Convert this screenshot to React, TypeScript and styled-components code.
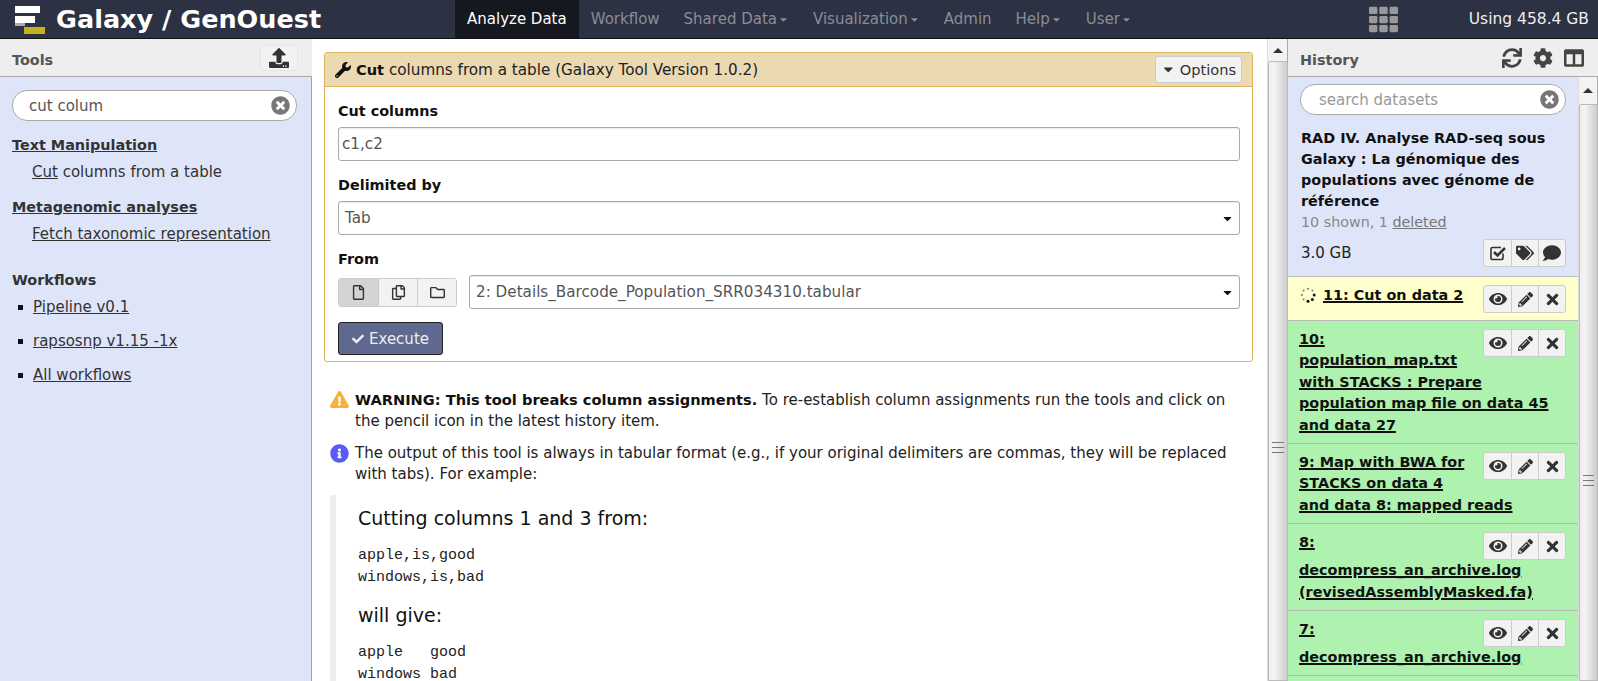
import React from 'react'
import styled, { createGlobalStyle } from 'styled-components'
import {
  FaCaretDown, FaCheck, FaCog, FaColumns, FaComment, FaEye, FaInfoCircle, FaPencilAlt,
  FaExclamationTriangle, FaRegCopy, FaRegFile, FaRegFolder, FaSync,
  FaTags, FaTh, FaTimes, FaTimesCircle, FaUpload, FaWrench,
} from 'react-icons/fa'

const GlobalStyle = createGlobalStyle`
  html, body { margin: 0; height: 100%; overflow: hidden; }
  body { font-family: "DejaVu Sans", Verdana, sans-serif; font-size: 15px; color: #111; background: #fff; }
  b { font-size: 14.6px; }
  * { box-sizing: border-box; }
`

const Page = styled.div`
  display: flex;
  flex-direction: column;
  height: 681px;
  overflow: hidden;
`

const Masthead = styled.header`
  display: flex;
  align-items: center;
  flex: 0 0 39px;
  height: 39px;
  padding-left: 15px;
  background: #2c3143;
  border-bottom: 1px solid #111;
`

const Brand = styled.div`
  display: flex;
  align-items: center;
  gap: 9px;
  width: 440px;
  color: #fff;
  font-size: 25.5px;
  font-weight: bold;
`

const Nav = styled.nav`
  display: flex;
  height: 38px;
  flex: 1;
`

const NavItem = styled.a<{ $active?: boolean }>`
  display: flex;
  align-items: center;
  gap: 1px;
  padding: 0 12px;
  color: ${p => (p.$active ? '#fff' : '#8a8d96')};
  background: ${p => (p.$active ? '#16181f' : 'transparent')};
  svg { font-size: 11px; }
`

const GridIcon = styled(FaTh)`
  color: #999;
  font-size: 29px;
  margin-right: 71px;
`

const Quota = styled.div`
  color: #eee;
  font-size: 15.5px;
  margin-right: 9px;
`

const Body = styled.main`
  flex: 1;
  display: flex;
  min-height: 0;
`

const SidePanel = styled.aside<{ $width: number }>`
  display: flex;
  flex-direction: column;
  flex: 0 0 ${p => p.$width}px;
  width: ${p => p.$width}px;
  min-height: 0;
`

const PanelHeader = styled.div`
  display: flex;
  align-items: center;
  justify-content: space-between;
  flex: 0 0 38px;
  padding: 0 12px;
  background: #eee;
  border-bottom: 1px solid #aaa;
`

const PanelTitle = styled.span`
  margin-top: 4px;
  color: #555;
  font-size: 14.4px;
  font-weight: bold;
`

const UploadButton = styled.div`
  display: flex;
  align-items: center;
  justify-content: center;
  width: 38px;
  height: 26px;
  margin-right: 2px;
  border: 1px solid #e6e6e6;
  border-radius: 3px;
  color: #333;
  font-size: 20px;
  background: #f2f2f2;
`

const ToolsBody = styled.div`
  flex: 1;
  background: #dfe5f9;
  border-right: 1px solid #a0a0b0;
  padding: 13px 14px 0 12px;
`

const Search = styled.div<{ $placeholder?: boolean }>`
  display: flex;
  align-items: center;
  justify-content: space-between;
  height: 31px;
  padding: 0 6px 0 ${p => (p.$placeholder ? 18 : 16)}px;
  background: #fff;
  border: 1px solid #aaa;
  border-radius: 15px;
  color: ${p => (p.$placeholder ? '#999' : '#555')};
  svg { color: #777; font-size: 19px; }
`

const Section = styled.a`
  display: block;
  margin-top: 14px;
  color: #333;
  font-size: 14.4px;
  font-weight: bold;
  text-decoration: underline;
  line-height: 20px;
`

const ToolLink = styled.div`
  margin: 7px 0 0 20px;
  color: #333;
  line-height: 21px;
  u { text-decoration: underline; }
`

const WorkflowsTitle = styled.div`
  margin-top: 25px;
  font-size: 14.4px;
  font-weight: bold;
  color: #333;
  line-height: 20px;
`

const WorkflowItem = styled.div`
  display: flex;
  align-items: center;
  gap: 10px;
  height: 34px;
  color: #333;
  text-decoration: underline;
  &::before {
    content: '';
    width: 5px;
    height: 5px;
    margin-left: 6px;
    background: #111;
  }
`

const Center = styled.section`
  flex: 1;
  min-width: 0;
  overflow: hidden;
  padding: 13px 14px 0 12px;
`

const Scrollbar = styled.div<{ $width: number }>`
  display: flex;
  flex-direction: column;
  flex: 0 0 ${p => p.$width}px;
  background: #f3f3f3;
  border-left: 1px solid #ddd;
  border-right: 1px solid #aaa;
`

const ScrollArrow = styled.div<{ $height: number }>`
  flex: 0 0 ${p => p.$height}px;
  display: flex;
  align-items: center;
  justify-content: center;
  &::before {
    content: '';
    border-left: 5px solid transparent;
    border-right: 5px solid transparent;
    border-bottom: 5px solid #333;
  }
`

const ScrollThumb = styled.div<{ $gripTop: number }>`
  flex: 1;
  margin: 0 -1px 0 0;
  background: linear-gradient(90deg, #eee, #f4f4f4 30%, #ccc);
  border: 1px solid #bbb;
  border-radius: 2px 2px 0 0;
  padding-top: ${p => p.$gripTop}px;
  &::before {
    content: '';
    display: block;
    height: 9px;
    margin: 0 3px;
    border-top: 1px solid #777;
    border-bottom: 1px solid #777;
    background: linear-gradient(#777, #777) center / 100% 1px no-repeat;
  }
`

const ToolCard = styled.div`
  border: 1px solid #dcb35a;
  border-radius: 3px;
`

const CardHeader = styled.div`
  display: flex;
  align-items: center;
  justify-content: space-between;
  height: 34px;
  padding: 0 10px;
  background: #ebd9b2;
  border-bottom: 1px solid #dcb35a;
`

const CardTitle = styled.div`
  display: flex;
  align-items: center;
  gap: 5px;
  color: #222;
  font-size: 15.2px;
  b { color: #111; }
  svg { font-size: 16px; color: #111; }
`

const OptionsButton = styled.div`
  display: flex;
  align-items: center;
  gap: 4px;
  height: 27px;
  padding: 0 5px;
  background: #f2f2f2;
  border: 1px solid #ccc;
  border-radius: 3px;
  color: #333;
  font-size: 14.6px;
`

const CardBody = styled.div`
  padding: 14px 12px 6px 13px;
`

const FieldLabel = styled.div`
  font-size: 14.4px;
  font-weight: bold;
  line-height: 20px;
  margin-bottom: 6px;
  color: #111;
`

const Field = styled.div<{ $indent?: number; $grow?: boolean }>`
  display: flex;
  align-items: center;
  justify-content: space-between;
  height: 34px;
  margin-bottom: 14px;
  padding: 0 5px 0 ${p => p.$indent ?? 6}px;
  border: 1px solid #aaa;
  border-radius: 3px;
  color: #555;
  font-size: 15.2px;
  background: #fff;
  flex: ${p => (p.$grow ? 1 : 'none')};
  box-shadow: inset 0 1px 1px rgba(0, 0, 0, 0.08);
  svg { font-size: 13px; color: #111; }
`

const SourceRow = styled.div`
  display: flex;
  align-items: flex-start;
  gap: 12px;
  margin: 2px 0 -1px;
`

const ButtonGroup = styled.div`
  display: flex;
  border: 1px solid #ccc;
  border-radius: 3px;
  overflow: hidden;
`

const SourceGroup = styled(ButtonGroup)`
  margin-top: 3px;
`

const SourceButton = styled.div<{ $active?: boolean }>`
  display: flex;
  align-items: center;
  justify-content: center;
  width: 39px;
  height: 27px;
  font-size: 15px;
  color: #333;
  background: ${p => (p.$active ? '#d4d4d4' : '#f2f2f2')};
  & + & { border-left: 1px solid #ccc; }
`

const ExecuteButton = styled.div`
  display: inline-flex;
  align-items: center;
  gap: 5px;
  height: 33px;
  padding: 0 13px;
  background: #5f6990;
  border: 1px solid #222;
  border-radius: 3px;
  color: #eee;
  svg { font-size: 12px; }
`

const HelpRow = styled.div<{ $first?: boolean }>`
  display: flex;
  gap: 6px;
  margin: ${p => (p.$first ? '27px' : '11px')} 0 0 6px;
  line-height: 21px;
  color: #222;
  p { margin: 0; padding-right: 20px; }
  b { color: #111; }
`

const WarnIcon = styled(FaExclamationTriangle)`
  flex: none;
  margin-top: 1px;
  color: #fbb03b;
  font-size: 19px;
`

const InfoIcon = styled(FaInfoCircle)`
  flex: none;
  margin-top: 1px;
  color: #5a5af5;
  font-size: 19px;
`

const Quote = styled.blockquote`
  margin: 10px 0 0 6px;
  padding: 9px 0 0 22px;
  border-left: 6px solid #eee;
`

const QuoteHeading = styled.div`
  font-size: 19px;
  line-height: 28px;
  color: #111;
`

const Sample = styled.pre`
  margin: 13px 0 12px;
  font-family: "Liberation Mono", monospace;
  font-size: 15px;
  line-height: 22px;
  color: #222;
`

const HistoryIcons = styled.div`
  display: flex;
  align-items: center;
  gap: 11px;
  color: #444;
  font-size: 20px;
  margin-right: 2px;
`

const HistoryScroll = styled.div`
  flex: 1;
  min-height: 0;
  overflow: hidden;
  display: flex;
`

const HistoryList = styled.div`
  flex: 1;
  min-width: 0;
`

const HistoryInfo = styled.div`
  background: #dfe5f9;
  padding: 7px 12px 9px 12px;
  border-bottom: 1px solid #bbb;
`

const HistoryName = styled.div`
  margin-top: 13px;
  padding-left: 1px;
  font-size: 14.4px;
  font-weight: bold;
  line-height: 21px;
  color: #111;
`

const HistoryMeta = styled.div`
  padding-left: 1px;
  color: #888;
  font-size: 14.3px;
  line-height: 21px;
  u { color: #777; }
`

const HistorySize = styled.div`
  display: flex;
  align-items: center;
  justify-content: space-between;
  margin-top: 6px;
  padding-left: 1px;
  color: #222;
`

const ActionGroup = styled(ButtonGroup)`
  background: #f2f2f2;
  height: 28px;
`

const ActionButton = styled.div`
  display: flex;
  align-items: center;
  justify-content: center;
  width: 27px;
  color: #333;
  font-size: 18px;
  & + & { border-left: 1px solid #ccc; }
`

const Dataset = styled.div<{ $state: 'running' | 'ok' }>`
  padding: 8px 12px 7px 11px;
  font-size: 14.4px;
  line-height: 21.4px;
  background: ${p => (p.$state === 'running' ? '#ffffcc' : '#aff1af')};
  border-bottom: 1px solid #bbb;
  font-weight: bold;
  color: #111;
  &::after { content: ''; display: block; clear: both; }
`

const DatasetTitle = styled.a`
  text-decoration: underline;
  text-decoration-thickness: 2px;
`

const FloatActions = styled(ActionGroup)`
  float: right;
  margin-left: 8px;
`

const Spinner = styled.svg`
  vertical-align: -3px;
  margin: 0 7px 0 1px;
`

const Logo = () => (
  <svg width="32" height="32" viewBox="0 0 32 32">
    <rect x="0" y="3" width="25" height="7" fill="#fff" />
    <rect x="0" y="13" width="20" height="7" fill="#fff" />
    <rect x="9" y="24" width="21" height="7" fill="#d4c020" opacity="0.9" />
    <rect x="0" y="20" width="10" height="3" fill="#fff" opacity="0.6" />
  </svg>
)

const SpinnerIcon = () => (
  <Spinner width="16" height="16" viewBox="0 0 16 16">
    {[0, 1, 2, 3, 4, 5, 6, 7].map(i => {
      const a = (i * Math.PI) / 4
      return <circle key={i} cx={8 + 6.2 * Math.cos(a)} cy={8 + 6.2 * Math.sin(a)} r={i < 3 ? 1.5 : 1} fill={i < 3 ? '#111' : '#777'} />
    })}
  </Spinner>
)

const CheckBoxIcon = () => (
  <svg width="18" height="18" viewBox="0 0 18 18" fill="none" stroke="#333">
    <path d="M14 9.5V14a1.5 1.5 0 0 1-1.5 1.5h-9A1.5 1.5 0 0 1 2 14V5a1.5 1.5 0 0 1 1.5-1.5H12" strokeWidth="1.6" />
    <path d="M5 8l3.5 3.5L16 4" strokeWidth="2.6" />
  </svg>
)

const Actions = () => (
  <FloatActions>
    <ActionButton><FaEye /></ActionButton>
    <ActionButton><FaPencilAlt size={15} /></ActionButton>
    <ActionButton><FaTimes size={17} /></ActionButton>
  </FloatActions>
)

const datasets = [
  '10: population_map.txt with STACKS : Prepare population map file on data 45 and data 27',
  '9: Map with BWA for STACKS on data 4 and data 8: mapped reads',
  '8: decompress_an_archive.log (revisedAssemblyMasked.fa)',
  '7: decompress_an_archive.log',
]

export default function App() {
  return (
    <Page>
      <GlobalStyle />
      <Masthead>
        <Brand><Logo />Galaxy / GenOuest</Brand>
        <Nav>
          <NavItem $active>Analyze Data</NavItem>
          <NavItem>Workflow</NavItem>
          <NavItem>Shared Data<FaCaretDown /></NavItem>
          <NavItem>Visualization<FaCaretDown /></NavItem>
          <NavItem>Admin</NavItem>
          <NavItem>Help<FaCaretDown /></NavItem>
          <NavItem>User<FaCaretDown /></NavItem>
        </Nav>
        <GridIcon />
        <Quota>Using 458.4 GB</Quota>
      </Masthead>
      <Body>
        <SidePanel $width={312}>
          <PanelHeader><PanelTitle>Tools</PanelTitle><UploadButton><FaUpload /></UploadButton></PanelHeader>
          <ToolsBody>
            <Search>cut colum<FaTimesCircle /></Search>
            <Section>Text Manipulation</Section>
            <ToolLink><u>Cut</u> columns from a table</ToolLink>
            <Section>Metagenomic analyses</Section>
            <ToolLink><u>Fetch taxonomic representation</u></ToolLink>
            <WorkflowsTitle>Workflows</WorkflowsTitle>
            <WorkflowItem>Pipeline v0.1</WorkflowItem>
            <WorkflowItem>rapsosnp v1.15 -1x</WorkflowItem>
            <WorkflowItem>All workflows</WorkflowItem>
          </ToolsBody>
        </SidePanel>
        <Center>
          <ToolCard>
            <CardHeader>
              <CardTitle><FaWrench /><span><b>Cut</b> columns from a table (Galaxy Tool Version 1.0.2)</span></CardTitle>
              <OptionsButton><FaCaretDown />Options</OptionsButton>
            </CardHeader>
            <CardBody>
              <FieldLabel>Cut columns</FieldLabel>
              <Field $indent={3}>c1,c2</Field>
              <FieldLabel>Delimited by</FieldLabel>
              <Field>Tab<FaCaretDown /></Field>
              <FieldLabel>From</FieldLabel>
              <SourceRow>
                <SourceGroup>
                  <SourceButton $active><FaRegFile /></SourceButton>
                  <SourceButton><FaRegCopy /></SourceButton>
                  <SourceButton><FaRegFolder /></SourceButton>
                </SourceGroup>
                <Field $grow>2: Details_Barcode_Population_SRR034310.tabular<FaCaretDown /></Field>
              </SourceRow>
              <ExecuteButton><FaCheck />Execute</ExecuteButton>
            </CardBody>
          </ToolCard>
          <HelpRow $first>
            <WarnIcon />
            <p><b>WARNING: This tool breaks column assignments.</b> To re-establish column assignments run the tools and click on the pencil icon in the latest history item.</p>
          </HelpRow>
          <HelpRow>
            <InfoIcon />
            <p>The output of this tool is always in tabular format (e.g., if your original delimiters are commas, they will be replaced with tabs). For example:</p>
          </HelpRow>
          <Quote>
            <QuoteHeading>Cutting columns 1 and 3 from:</QuoteHeading>
            <Sample>{'apple,is,good\nwindows,is,bad'}</Sample>
            <QuoteHeading>will give:</QuoteHeading>
            <Sample>{'apple   good\nwindows bad'}</Sample>
          </Quote>
        </Center>
        <Scrollbar $width={21}>
          <ScrollArrow $height={22} />
          <ScrollThumb $gripTop={380} />
        </Scrollbar>
        <SidePanel $width={310}>
          <PanelHeader>
            <PanelTitle>History</PanelTitle>
            <HistoryIcons><FaSync /><FaCog /><FaColumns /></HistoryIcons>
          </PanelHeader>
          <HistoryScroll>
            <HistoryList>
              <HistoryInfo>
                <Search $placeholder>search datasets<FaTimesCircle /></Search>
                <HistoryName>RAD IV. Analyse RAD-seq sous Galaxy : La génomique des populations avec génome de référence</HistoryName>
                <HistoryMeta>10 shown, 1 <u>deleted</u></HistoryMeta>
                <HistorySize>
                  3.0 GB
                  <ActionGroup>
                    <ActionButton><CheckBoxIcon /></ActionButton>
                    <ActionButton><FaTags /></ActionButton>
                    <ActionButton><FaComment /></ActionButton>
                  </ActionGroup>
                </HistorySize>
              </HistoryInfo>
              <Dataset $state="running">
                <Actions />
                <SpinnerIcon /><DatasetTitle>11: Cut on data 2</DatasetTitle>
              </Dataset>
              {datasets.map(name => (
                <Dataset key={name} $state="ok">
                  <Actions />
                  <DatasetTitle>{name}</DatasetTitle>
                </Dataset>
              ))}
              <Dataset $state="ok" />
            </HistoryList>
            <Scrollbar $width={20}>
              <ScrollArrow $height={27} />
              <ScrollThumb $gripTop={370} />
            </Scrollbar>
          </HistoryScroll>
        </SidePanel>
      </Body>
    </Page>
  )
}
